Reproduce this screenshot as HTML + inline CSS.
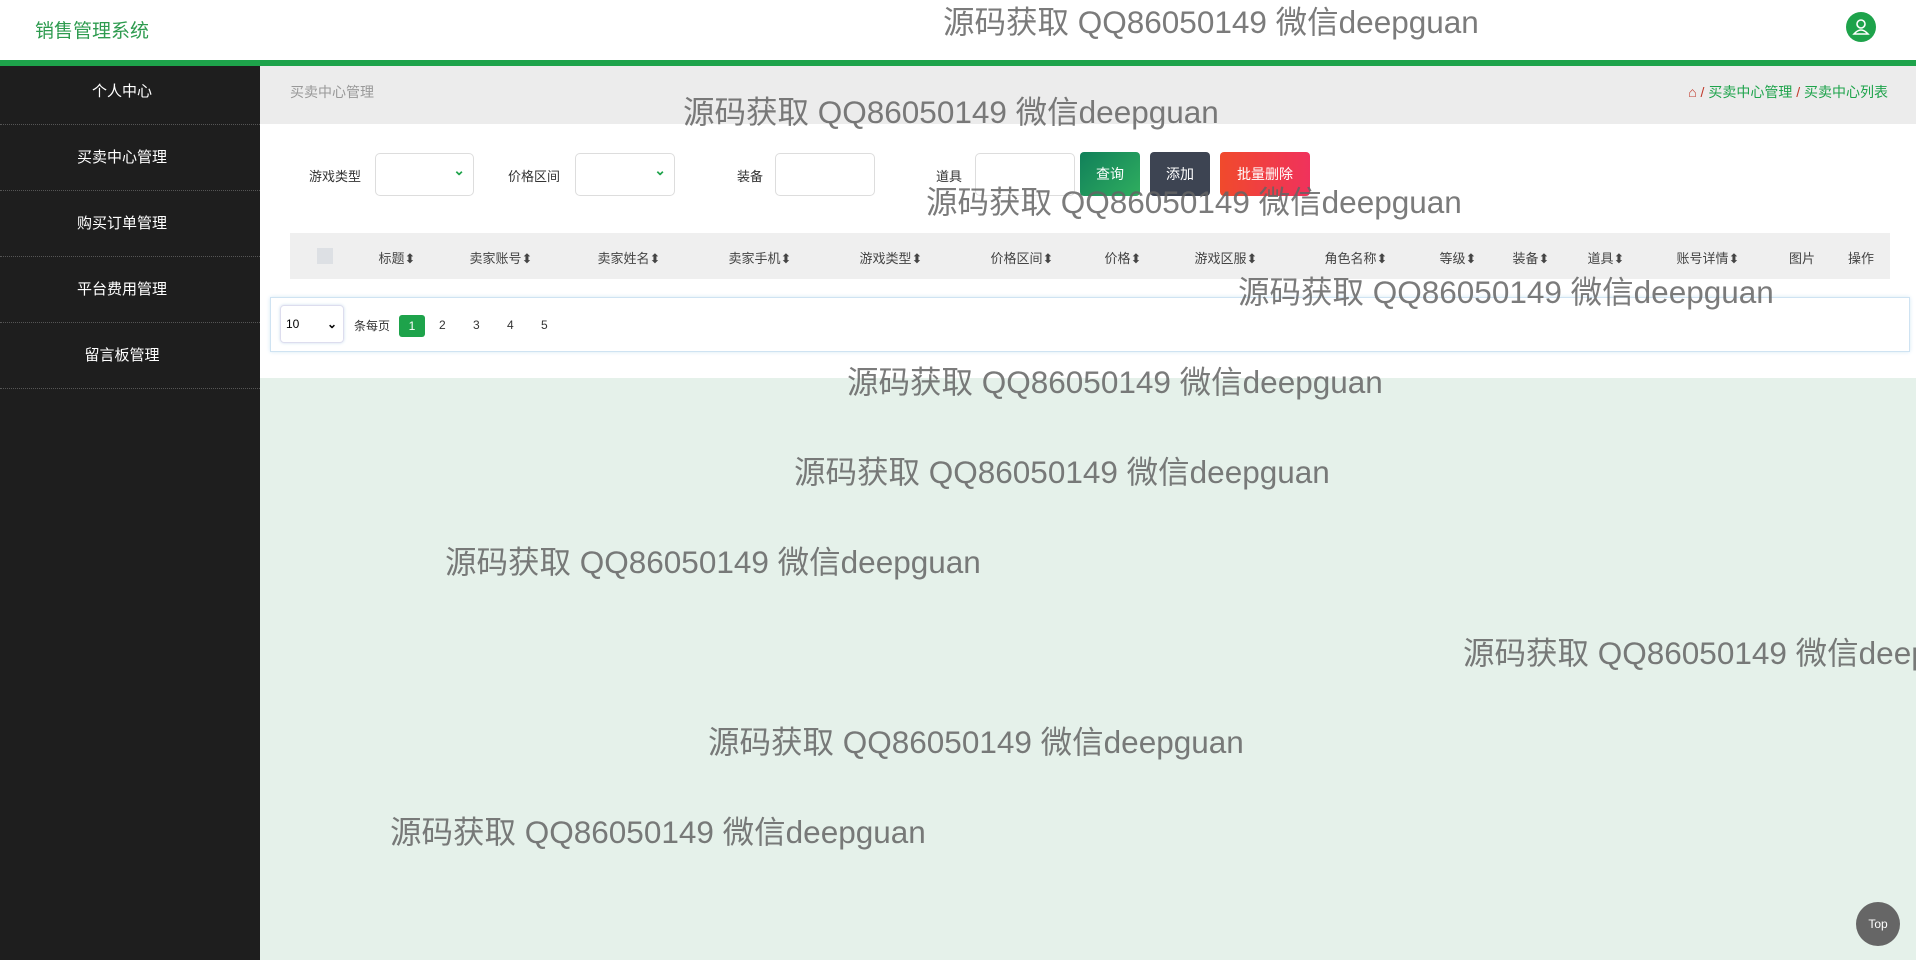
<!DOCTYPE html>
<html><head><meta charset="utf-8"><style>
*{box-sizing:border-box;margin:0;padding:0}
body{width:1916px;height:960px;overflow:hidden;font-family:"Liberation Sans","Noto Sans CJK SC",sans-serif;background:#e5f1ea;position:relative}
.hdr{position:absolute;left:0;top:0;width:1916px;height:60px;background:#fff}
.bar{position:absolute;left:0;top:60px;width:1916px;height:6px;background:#1ea34b}
.title{position:absolute;left:35px;top:16px;font-size:19px;color:#2e9b4f}
.user{position:absolute;left:1846px;top:12px;width:30px;height:30px;border-radius:50%;background:#1ea34b}
.side{position:absolute;left:0;top:66px;width:260px;height:894px;background:#1e1e1e}
.side div{height:66px;line-height:66px;text-align:center;color:#fff;font-size:15px;border-bottom:1px dotted #555;padding-right:16px}
.side div:first-child{height:59px;line-height:52px}
.crumb{position:absolute;left:260px;top:66px;width:1656px;height:58px;background:#ececec}
.crumb .l{position:absolute;left:30px;top:16px;font-size:14px;color:#999}
.crumb .r{position:absolute;right:28px;top:16px;font-size:14px;color:#1ea34b}
.crumb .r b{color:#c0392b;font-weight:normal}
.white{position:absolute;left:260px;top:124px;width:1656px;height:254px;background:#fff}
.lab{position:absolute;font-size:13px;color:#333;top:166px}
.inp{position:absolute;top:153px;height:43px;border:1px solid #ddd;border-radius:5px;background:#fff}
.sel::after{content:"⌄";position:absolute;right:8px;top:8px;color:#1ea34b;font-size:14px;font-weight:bold}
.btn{position:absolute;top:152px;height:44px;border-radius:4px;color:#fff;font-size:14px;line-height:44px;text-align:center}
.th{position:absolute;left:290px;top:233px;width:1600px;height:46px;background:#efefef}
.th span{position:absolute;top:15px;font-size:13px;color:#444;transform:translateX(-50%);white-space:nowrap}
.pg{position:absolute;left:270px;top:297px;width:1640px;height:55px;border:1px solid #cfe3f2;box-shadow:0 0 4px #d5e8f5;background:#fff}
.wm{position:absolute;font-size:31.5px;color:rgba(100,100,100,.85);white-space:nowrap;font-family:"Liberation Sans","Noto Sans CJK SC",sans-serif}
.top{position:absolute;left:1856px;top:902px;width:44px;height:44px;border-radius:50%;background:#666;color:#fff;font-size:12px;line-height:44px;text-align:center}
</style></head><body>
<div class="hdr"><div class="title">销售管理系统</div>
<div class="user"><svg width="30" height="30" viewBox="0 0 30 30"><circle cx="15" cy="12" r="4" fill="none" stroke="#fff" stroke-width="1.6"/><path d="M8 22q7-8 14 0z" fill="none" stroke="#fff" stroke-width="1.6"/></svg></div></div>
<div class="bar"></div>
<div class="side"><div>个人中心</div><div>买卖中心管理</div><div>购买订单管理</div><div>平台费用管理</div><div>留言板管理</div></div>
<div class="crumb"><div class="l">买卖中心管理</div><div class="r"><b>⌂ / </b>买卖中心管理 <b>/</b> 买卖中心列表</div></div>
<div class="white"></div>
<div class="lab" style="left:309px">游戏类型</div><div class="inp sel" style="left:375px;width:99px"></div>
<div class="lab" style="left:508px">价格区间</div><div class="inp sel" style="left:575px;width:100px"></div>
<div class="lab" style="left:737px">装备</div><div class="inp" style="left:775px;width:100px"></div>
<div class="lab" style="left:936px">道具</div><div class="inp" style="left:975px;width:100px"></div>
<div class="btn" style="left:1080px;width:60px;background:linear-gradient(135deg,#11805a,#2fae5f)">查询</div>
<div class="btn" style="left:1150px;width:60px;background:#3d4452">添加</div>
<div class="btn" style="left:1220px;width:90px;background:linear-gradient(90deg,#f04a2c,#f0325c)">批量删除</div>
<div class="th">
<span style="left:35px;top:15px;width:16px;height:16px;background:#dde0e4"></span>
<span style="left:107px">标题⬍</span><span style="left:211px">卖家账号⬍</span><span style="left:339px">卖家姓名⬍</span><span style="left:470px">卖家手机⬍</span><span style="left:601px">游戏类型⬍</span><span style="left:732px">价格区间⬍</span><span style="left:833px">价格⬍</span><span style="left:936px">游戏区服⬍</span><span style="left:1066px">角色名称⬍</span><span style="left:1168px">等级⬍</span><span style="left:1241px">装备⬍</span><span style="left:1316px">道具⬍</span><span style="left:1418px">账号详情⬍</span><span style="left:1512px">图片</span><span style="left:1571px">操作</span></div>
<div class="pg">
<div style="position:absolute;left:9px;top:7px;width:64px;height:38px;border:1px solid #dde;border-radius:4px;box-shadow:0 0 3px #cde;font-size:12px;line-height:36px;padding-left:5px">10<span style="position:absolute;right:6px;font-weight:bold">⌄</span></div>
<div style="position:absolute;left:83px;top:19px;font-size:12px;color:#333">条每页</div>
<div style="position:absolute;left:128px;top:17px;width:26px;height:22px;background:#1ea34b;color:#fff;border-radius:3px;font-size:12px;text-align:center;line-height:22px">1</div>
<div style="position:absolute;left:168px;top:20px;font-size:12px;color:#333;word-spacing:24px">2 3 4 5</div>
</div>
<div class="wm" style="left:943px;top:-3px">源码获取 QQ86050149 微信deepguan</div>
<div class="wm" style="left:683px;top:87px">源码获取 QQ86050149 微信deepguan</div>
<div class="wm" style="left:926px;top:177px">源码获取 QQ86050149 微信deepguan</div>
<div class="wm" style="left:1238px;top:267px">源码获取 QQ86050149 微信deepguan</div>
<div class="wm" style="left:847px;top:357px">源码获取 QQ86050149 微信deepguan</div>
<div class="wm" style="left:794px;top:447px">源码获取 QQ86050149 微信deepguan</div>
<div class="wm" style="left:445px;top:537px">源码获取 QQ86050149 微信deepguan</div>
<div class="wm" style="left:1463px;top:628px">源码获取 QQ86050149 微信deepguan</div>
<div class="wm" style="left:708px;top:717px">源码获取 QQ86050149 微信deepguan</div>
<div class="wm" style="left:390px;top:807px">源码获取 QQ86050149 微信deepguan</div>
<div class="top">Top</div>
</body></html>
